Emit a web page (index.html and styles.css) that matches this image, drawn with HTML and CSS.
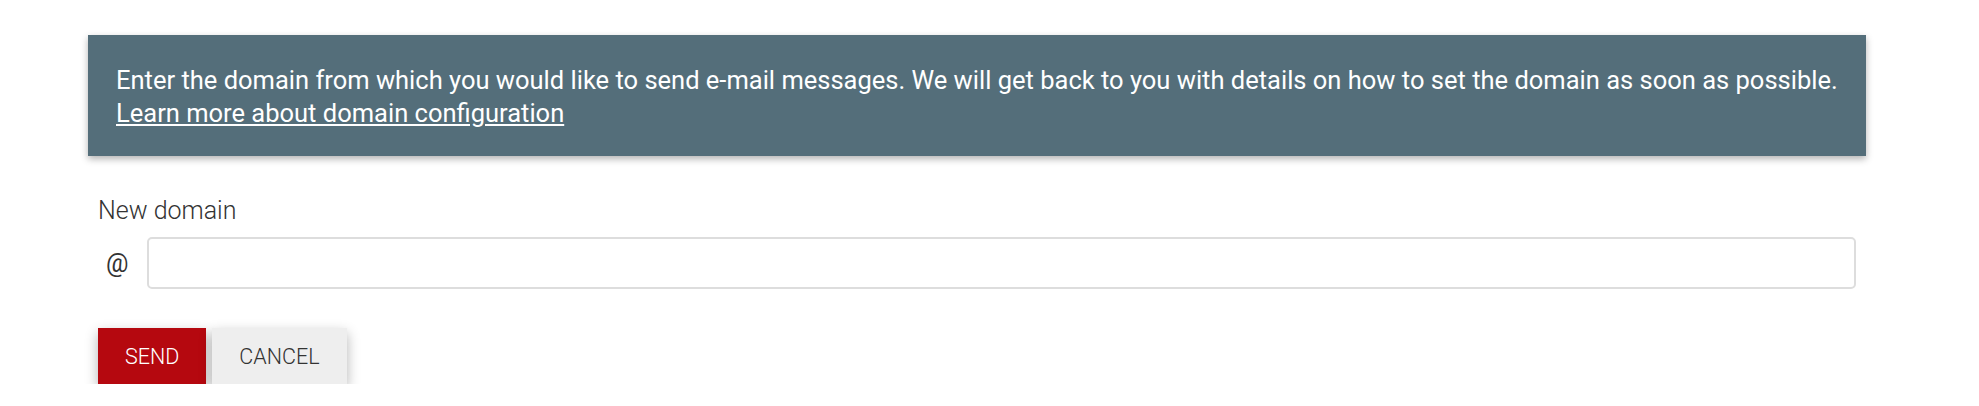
FILE: index.html
```html
<!DOCTYPE html>
<html lang="en">
<head>
    <meta charset="UTF-8">
    <meta name="viewport" content="width=device-width, initial-scale=1.0">
    <title>New domain</title>
    <link rel="stylesheet" href="styles.css">
</head>
<body>
    <div class="page">
        <div class="notice">
            Enter the domain from which you would like to send e-mail messages. We will get back to you with details on how to set the domain as soon as possible.<br>
            <a href="#">Learn more about domain configuration</a>
        </div>

        <form class="domain-form">
            <label for="domain">New domain</label>
            <div class="input-row">
                <span class="at">@</span>
                <input type="text" id="domain" name="domain">
            </div>
            <div class="actions">
                <button type="submit" class="btn btn-primary">SEND</button>
                <button type="button" class="btn btn-default">CANCEL</button>
            </div>
        </form>
    </div>
</body>
</html>
```

FILE: styles.css
```css
body {
    margin: 0;
    font-family: Roboto, "Liberation Sans", sans-serif;
    background: #fff;
    color: #333;
}
.page {
    width: 1778px;
    padding: 35px 0 0 88px;
}
.notice {
    background-color: #546e7a;
    color: #fff;
    font-size: 25.5px;
    line-height: 33px;
    padding: 29px 28px 26px;
    box-shadow: 0 3px 7px rgba(0,0,0,0.3);
}
.notice a {
    color: #fff;
    text-decoration: underline;
}
.domain-form {
    padding: 40px 10px 0;
}
label {
    display: block;
    font-size: 25px;
    font-weight: 300;
    line-height: 30px;
    margin-bottom: 11px;
}
.input-row {
    display: flex;
    align-items: center;
}
.at {
    font-size: 25px;
    width: 49px;
    padding-left: 8px;
    box-sizing: border-box;
}
input {
    flex: 1;
    height: 52px;
    box-sizing: border-box;
    border: 2px solid #ddd;
    border-radius: 5px;
    font-size: 22px;
    padding: 0 12px;
    outline: none;
}
.actions {
    display: flex;
    gap: 6px;
    margin-top: 39px;
}
.btn {
    height: 56px;
    padding: 0 27px;
    border: none;
    border-radius: 0;
    font-family: Roboto, "Liberation Sans", sans-serif;
    font-size: 21.5px;
    font-weight: 300;
    cursor: pointer;
    box-shadow: 0 5px 12px rgba(0,0,0,0.3);
}
.btn-primary {
    background-color: #b5080f;
    color: #fff;
}
.btn-default {
    background-color: #eeeeee;
    color: #333;
}
```
